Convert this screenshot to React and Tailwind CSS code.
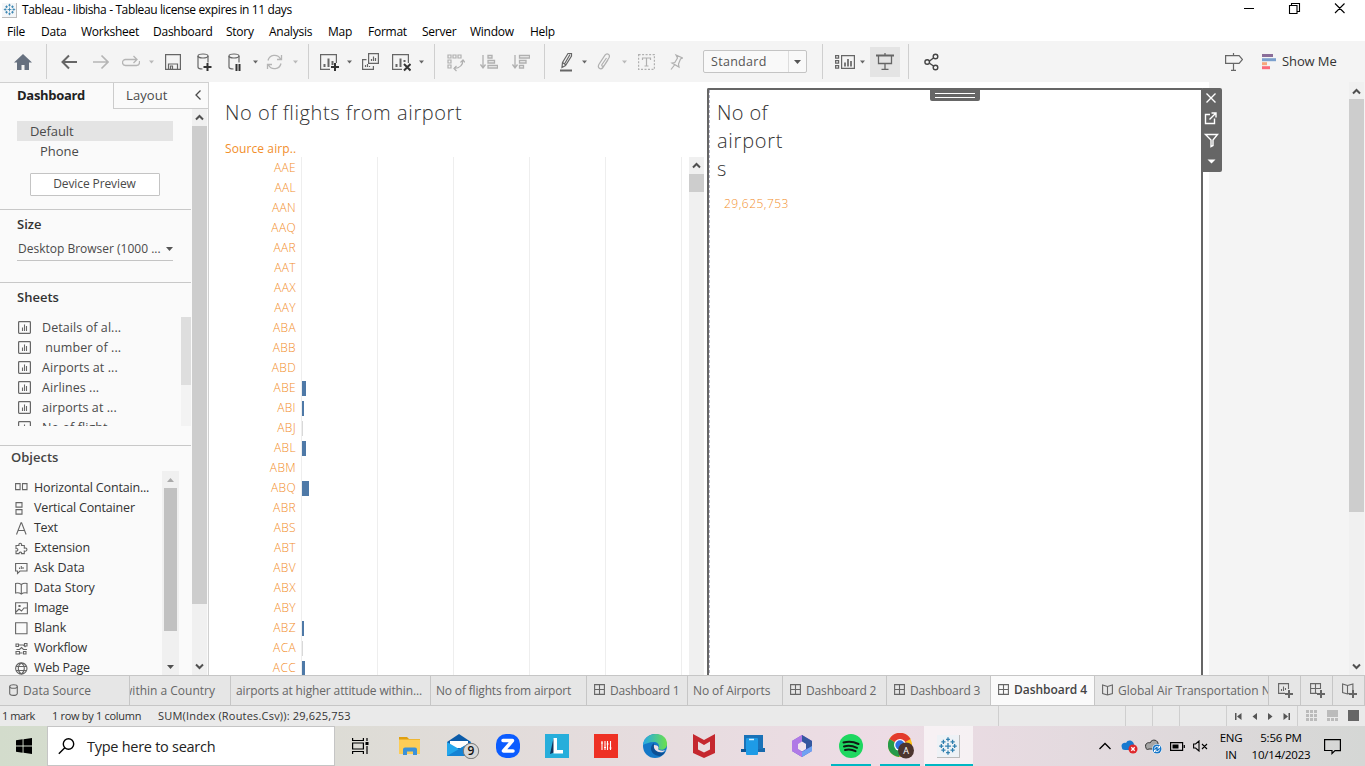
import React from "react";

const UI = "font-['Open_Sans','Noto_Sans',sans-serif]";

function Svg({ w, h = 20, className = "", children, ...rest }) {
  return (
    <svg width={w} height={h} viewBox={`0 0 ${w} ${h}`} fill="none" stroke="currentColor" className={`shrink-0 ${className}`} {...rest}>
      {children}
    </svg>
  );
}

const Sep = ({ className = "" }) => <div className={`h-[35px] w-px shrink-0 bg-[#cfcfcf] ${className}`} />;
const Caret = ({ className = "", light }) => (
  <Svg w={5} h={4} className={`${className} ${light ? "text-[#b9b9b9]" : "text-[#666]"}`} stroke="none">
    <path d="M0 0.5h5L2.5 3.5z" fill="currentColor" />
  </Svg>
);
const Chevron = ({ up, className = "" }) => (
  <Svg w={9} h={7} className={`text-[#505050] ${className}`} strokeWidth="2">
    <path d={up ? "M1 5.5L4.5 2L8 5.5" : "M1 1.5L4.5 5L8 1.5"} />
  </Svg>
);

function TableauMark({ size, className = "" }) {
  return (
    <svg width={size} height={size} viewBox="0 0 24 24" className={className} stroke="#2f7fae" strokeWidth="1.5">
      <path d="M12 8.5v7M8.5 12h7M12 1.5v5M9.7 4h4.6M12 17.5v5M9.7 20h4.6M1.5 12h5M4 9.7v4.6M17.5 12h5M20 9.7v4.6M6.5 4.5v5M4 7h5M17.5 4.5v5M15 7h5M6.5 14.5v5M4 17h5M17.5 14.5v5M15 17h5" />
    </svg>
  );
}

const menus = [
  ["File", "w-[34px]"], ["Data", "w-10"], ["Worksheet", "w-18"], ["Dashboard", "w-[73px]"], ["Story", "w-[43px]"],
  ["Analysis", "w-[59px]"], ["Map", "w-10"], ["Format", "w-[54px]"], ["Server", "w-12"], ["Window", "w-15"], ["Help", "w-10"],
];

function TitleBar() {
  return (
    <header className="h-[41px] shrink-0 bg-white text-[12px] text-black">
      <div className="flex h-5 items-center">
        <div className="ml-[2px] flex size-[15px] items-center justify-center border-r border-b border-[#bbb] bg-[#f4f6f8]">
          <TableauMark size={13} />
        </div>
        <span className="ml-[5px] whitespace-nowrap tracking-[-0.37px]">Tableau - libisha - Tableau license expires in 11 days</span>
        <Svg w={104} h={12} className="-mt-1 mr-[18px] ml-auto" strokeWidth="1.100">
          <path d="M1 6.500h10M46.500 3.500h7.500v8h-7.500zM48.500 3v-1.500h8v8h-2M92 1.500l9.500 9.500M101.500 1.500l-9.500 9.500" />
        </Svg>
      </div>
      <nav className="ml-[7px] flex h-[21px] items-center pt-[2px] tracking-[-0.25px]">
        {menus.map(([m, w]) => <span key={m} className={`${w} shrink-0 whitespace-nowrap`}>{m}</span>)}
      </nav>
    </header>
  );
}

function Toolbar() {
  return (
    <div className="flex h-[41px] shrink-0 items-center bg-[#f4f4f4] text-[#666]">
      <Svg w={18} className="ml-3.5 text-[#66707f]" stroke="none"><path fill="currentColor" d="M9 2L0 10.500h3V18h4.500v-5h3v5H15v-7.500h3z" /></Svg>
      <Sep className="ml-3.5" />
      <Svg w={16} className="ml-3.5" strokeWidth="2"><path d="M1 10h15M8 3.500L1.500 10L8 16.500" /></Svg>
      <Svg w={16} className="ml-4 text-[#b5b5b5]" strokeWidth="1.7"><path d="M0 10h15M8.500 3.500L15 10l-6.500 6.500" /></Svg>
      <Svg w={18} className="ml-[13px] text-[#b5b5b5]" strokeWidth="1.3"><path d="M14.500 7.500H3.500a3 3 0 0 0 0 6h11a3 3 0 0 0 3-3v-1.500M11.500 4L15 7.500L11.500 11" /></Svg>
      <Caret light className="ml-[9px]" />
      <Svg w={16} className="ml-[11px]" strokeWidth="1.2"><path d="M.6 2.600h14.800v14.800H.6zM3.500 17v-5h9v5M5.500 17v-3h2v3" /></Svg>
      <Svg w={15} className="ml-4" strokeWidth="1.2">
        <ellipse cx="6" cy="4" rx="5" ry="2" /><path d="M1 4v11c0 1.200 2 2 4.500 2M11 4v6.500" />
        <path d="M10.500 11v8M6.500 15h8" stroke="#333" strokeWidth="2" />
      </Svg>
      <Svg w={14} className="ml-4" strokeWidth="1.2">
        <ellipse cx="6" cy="4" rx="5" ry="2" /><path d="M1 4v11c0 1.200 2 2 4.500 2M11 4v6.500" />
        <path d="M8.500 12v7M11.500 12v7" stroke="#333" strokeWidth="2" />
      </Svg>
      <Caret className="ml-[11px]" />
      <Svg w={17} className="ml-2 text-[#b5b5b5]" strokeWidth="1.300"><path d="M2 8.500A6.700 6.700 0 0 1 14.500 7M15 11.500A6.700 6.700 0 0 1 2.500 13M15.500 3v4.500H11M1.500 17v-4.500H6" /></Svg>
      <Caret light className="ml-2.5" />
      <Sep className="ml-2.5" />
      <Svg w={19} className="ml-[11px]" strokeWidth="1.2">
        <path d="M10 17.400H.6V2.600h15.800V11" /><path d="M4.500 15v-3M8.500 15V6.500M12.500 13V9" strokeWidth="2" />
        <path d="M15 11v8M11 15h8" stroke="#333" strokeWidth="2" />
      </Svg>
      <Caret className="ml-2" />
      <Svg w={17} className="ml-2.5" strokeWidth="1.2"><path d="M6.600 1.600h9.800v9.800H6.600zM4.500 7.600H.6v9.800h10.800v-3.500M9.500 9V7M11.500 9V4.500M13.500 9V6M3.500 15v-2M5.500 15v-3M7.500 15v-1" /></Svg>
      <Svg w={19} className="ml-[13px]" strokeWidth="1.2">
        <path d="M10 17.400H.6V2.600h15.800V11" /><path d="M4.500 15v-3M8.500 15V6.500M12.500 10V8" strokeWidth="2" />
        <path d="M12 12l6.500 6.500M18.500 12L12 18.500" stroke="#333" strokeWidth="2" />
      </Svg>
      <Caret className="ml-2" />
      <Sep className="ml-2.5" />
      <Svg w={18} className="ml-3 text-[#b0b0b0]" strokeWidth="1.2"><path d="M1 3h3v3H1zM6 3h3v3H6zM11 3h3v3h-3zM1 8h3v3H1zM1 13h3v3H1zM16 8c0 5-3 8-9 8.500M13.500 10.500L16 8l2 2.500M9.500 14L7 16.500L9.500 19" /></Svg>
      <Svg w={18} className="ml-[15px] text-[#b0b0b0]" strokeWidth="1.3"><path d="M3 3v13M.5 12.500L3 16l2.500-3.500M8 3.500h4V6H8zM8 8.500h6.500V11H8zM8 13.500h9.500V16H8z" /></Svg>
      <Svg w={18} className="ml-3.5 text-[#b0b0b0]" strokeWidth="1.3"><path d="M3 3v13M.5 12.500L3 16l2.500-3.500M7.500 3.500h10V6h-10zM7.500 8.500H14V11H7.500zM7.500 13.500h4V16h-4z" /></Svg>
      <Sep className="ml-3.5" />
      <Svg w={13} className="ml-[15px]" strokeWidth="1.2"><path d="M2.500 10.500L8 1.500h3.500v2.500L5.500 13.500l-3.500 2zM2.500 10.500l3.500 2.500M10 2.500l-5.500 9.500" /><path d="M0 18.500h12" strokeWidth="2" /></Svg>
      <Caret className="ml-[9px]" />
      <Svg w={14} className="ml-2.5 text-[#b0b0b0]" strokeWidth="1.2"><path d="M9.500 6L5 12.500c-.8 1.500 1 2.500 2 1.200l5-8C13.500 2.500 10 .5 8 3.200l-6 9C0 15.800 3.500 18.500 6 15.500l5-7.500" /></Svg>
      <Caret light className="ml-[11px]" />
      <Svg w={17} className="ml-[11px] text-[#b0b0b0]" strokeWidth="1.2"><path d="M.6 2.600h15.800v14.800H.6z" strokeDasharray="2 1.500" /><path d="M4.500 8V6h8v2M8.500 6v8M6.500 14h4" /></Svg>
      <Svg w={13} className="ml-[15px] text-[#b0b0b0]" strokeWidth="1.2"><path d="M6 3l6.500 3-2 1-2 5 .5 3-7-4 2.800-.5L7.500 6zM4.500 13L1 17.500" /></Svg>
      <div className={`ml-5 flex h-[23px] w-[104px] shrink-0 rounded-[2px] border border-[#c4c4c4] bg-[#f9f9f9] ${UI} text-[12.5px] leading-[21px] text-[#555]`}>
        <span className="w-[84px] pl-[7px] tracking-[0.3px]">Standard</span>
        <span className="flex w-[18px] items-center justify-center border-l border-[#ddd]"><Svg w={7} h={4} stroke="none"><path d="M0 0h7L3.500 4z" fill="#555" /></Svg></span>
      </div>
      <Sep className="ml-[15px]" />
      <Svg w={20} className="ml-3" strokeWidth="1.2"><path d="M.6 3.600h3v2.500h-3zM.6 8.600h3v2.500h-3zM.6 13.600h3v2.500h-3zM6.600 3.600h12.800v12.800H6.600z" /><path d="M10 14.500v-4M13 14.500V7M16 14.500V9" strokeWidth="1.7" /></Svg>
      <Caret className="ml-[5px]" />
      <div className="ml-[5px] flex h-[30px] w-[30px] shrink-0 items-center justify-center bg-[#e4e4e4]">
        <Svg w={18} h={20} strokeWidth="1.300"><path d="M0 3.500h18" strokeWidth="2" /><path d="M2.500 4v7.500h13V4M9 1v2M9 11.500V17M5.500 17.400h7" /></Svg>
      </div>
      <Sep className="ml-2" />
      <Svg w={15} className="ml-[15px] text-[#444]" strokeWidth="1.4"><circle cx="11.500" cy="4.500" r="2.300" /><circle cx="3.200" cy="10" r="2.300" /><circle cx="11.500" cy="15.500" r="2.300" /><path d="M5.500 9L9.500 6M5.500 11.200l4 2.800" /></Svg>
      <Svg w={18} className="ml-[286px]" strokeWidth="1.2"><path d="M8.500 1v2.500M.6 3.600h13.500L17.500 7.500l-3.400 3.900H.6zM8.500 11.500V18M6 18.400h5" /></Svg>
      <Svg w={14} h={16} className="ml-[19px]" stroke="none"><path fill="#8a6d99" d="M0 0h11v3H0z" /><path fill="#7ba0cd" d="M0 4.200h14v3H0z" /><path fill="#f7a77c" d="M0 8.200h5v3H0z" /><path fill="#fb6b7b" d="M0 12.200h8v3H0z" /></Svg>
      <span className={`ml-1.5 whitespace-nowrap ${UI} text-[13px] tracking-[-0.1px] text-[#333]`}>Show Me</span>
    </div>
  );
}

const SheetIcon = () => (
  <Svg w={13} h={13} className="-mt-px text-[#666]" strokeWidth="1.2"><rect x=".6" y=".6" width="11.800" height="11.800" rx=".8" /><path d="M4.500 10V6.500M6.500 10V3.500M8.500 10V5" strokeWidth="1.100" /></Svg>
);

const objects = [
  ["Horizontal Contain...", "M.6 1.600h4.500v6H.6zM7.500 1.600h4.500v6H7.500z", "tracking-[-0.18px]"],
  ["Vertical Container", "M1 .6h6v4.500H1zM1 7.600h6v4.500H1z", "tracking-[-0.17px]"],
  ["Text", "M1.500 12.500L6 .8h.6l4.500 11.700M3 8.500h6.500", "tracking-[-0.3px]"],
  ["Extension", "M1 5V3.500h3C3 .5 7.500.5 6.500 3.500h2.800v2.600c3.500-1 3.500 4 0 3v2.500H6.500c.5-2-2.500-2-2.500 0H1V9c2.500.5 2.500-3 0-2.500z", "tracking-[-0.1px]"],
  ["Ask Data", "M.6 1.500h11.400v7.500H5L2.500 11.500V9H.6zM4.500 7V5.500M6.300 7V4M8 7V5", "tracking-[-0.05px]"],
  ["Data Story", "M6.300 2.500C4.500 1.300 2.500 1 .6 1.500v9.500c2-.5 4-.2 5.700 1c1.700-1.200 3.700-1.500 5.700-1V1.500c-2-.5-4-.2-5.700 1zM6.300 2.500V12", ""],
  ["Image", "M.6 .8h11.800v11H.6zM1 10l3-3 2.500 2L9 6h3.500M4 3.500h1v1H4z", "tracking-[-0.25px]"],
  ["Blank", "M.6 .8h11.400v11H.6z", "tracking-[-0.05px]"],
  ["Workflow", "M1 2h2.500v2.500H1zM3.500 3h5l2 2M9.500 1.500H12V4H9.500zM1.500 7.500h3l2-2 2 2h3.500M1 9.500h3.500V12H1zM4.500 11h3M8.500 9.500H11V12H8.500z", "tracking-[-0.3px]"],
  ["Web Page", "M6.300 .8a5.600 5.600 0 1 0 .01 0zM6.300 .8c-4 3-4 8.500 0 11.400c4-3 4-8.500 0-11.400M1 4.500h10.500M1 8.500h10.500", "tracking-[-0.25px]"],
];

function Sidebar() {
  return (
    <aside className={`flex w-[209px] shrink-0 flex-col border-t border-r border-[#d0d0d0] bg-[#fafafa] ${UI} text-[12.5px] text-[#4a4a4a]`}>
      <div className="flex h-[26px] shrink-0">
        <div className="w-[113px] pt-[3px] pl-[17px] text-[13px] leading-[18px] font-bold tracking-[-0.3px] text-[#222]">Dashboard</div>
        <div className="flex grow justify-between border-b border-l border-[#ccc] pt-[3px] pr-[7px] pl-3 text-[13px] leading-[18px] tracking-[0.1px]">
          Layout
          <Svg w={6} h={10} className="mt-1" strokeWidth="1.300"><path d="M5.500 .5L1 5l4.500 4.500" /></Svg>
        </div>
      </div>
      <div className="flex min-h-0 grow">
        <div className="flex w-[191px] shrink-0 flex-col overflow-hidden">
          <div className="h-[101px] shrink-0 border-b border-[#c8c8c8] pt-3 pl-[17px]">
            <div className="h-5 w-[156px] bg-[#e4e4e4] pl-[13px] text-[13px] leading-5 tracking-[-0.1px]">Default</div>
            <div className="h-5 pl-[23px] text-[13px] leading-5">Phone</div>
            <div className="mt-3 ml-[13px] h-[23px] w-[130px] rounded-[1px] border border-[#c4c4c4] bg-white pr-px text-center text-[12px] leading-[20px] tracking-[-0.1px]">Device Preview</div>
          </div>
          <div className="h-[73px] shrink-0 border-b border-[#c8c8c8] pt-[5px] pl-[17px]">
            <div className="text-[13px] leading-[18px] font-semibold text-[#333]">Size</div>
            <div className="mt-[6px] flex h-[22px] w-[156px] items-center justify-between border-b border-[#c4c4c4] pb-[1px] pl-px text-[12px]">
              <span className="whitespace-nowrap">Desktop Browser (1000 ...</span>
              <Svg w={7} h={4} stroke="none"><path d="M0 0h7L3.500 4z" fill="#555" /></Svg>
            </div>
          </div>
          <div className="h-[163px] shrink-0 border-b border-[#c8c8c8] pt-[5px]">
            <div className="pl-[17px] text-[13px] leading-[18px] font-semibold text-[#333]">Sheets</div>
            <div className="mt-[11px] flex h-[109px] overflow-hidden">
              <div className="w-[181px] pt-px pl-[18px]">
                {["Details of al...", "\u00a0number of ...", "Airports at ...", "Airlines ...", "airports at ...", "No of flight..."].map((s) => (
                  <div key={s} className="flex h-5 items-center gap-[11px]"><SheetIcon /><span className="text-[12.5px] tracking-[0.08px]">{s}</span></div>
                ))}
              </div>
              <div className="w-2.5 bg-[#f3f3f3]"><div className="h-[68px] bg-[#dedede]" /></div>
            </div>
          </div>
          <div className="flex min-h-0 grow flex-col">
            <div className="pt-[2px] pl-[11px] text-[13px] leading-[18px] font-semibold text-[#444]">Objects</div>
            <div className="mt-[5px] flex min-h-0 grow">
              <div className="w-[162px] overflow-hidden pt-[7px] pl-[15px] whitespace-nowrap text-[#333]">
                {objects.map(([n, d, t]) => (
                  <div key={n} className="flex h-5 items-center gap-1.5">
                    <Svg w={13} h={13} className="text-[#666]" strokeWidth="1.100"><path d={d} /></Svg>
                    <span className={t}>{n}</span>
                  </div>
                ))}
              </div>
              <div className="flex w-[17px] flex-col items-center bg-[#f0f0f0]">
                <Svg w={7} h={4} className="mt-[7px]" stroke="none"><path d="M0 4h7L3.500 0z" fill="#aaa" /></Svg>
                <div className="mt-[6px] h-[143px] w-[13px] bg-[#c1c1c1]" />
                <Svg w={7} h={4} className="mt-auto mb-[6px]" stroke="none"><path d="M0 0h7L3.500 4z" fill="#505050" /></Svg>
              </div>
            </div>
          </div>
        </div>
        <div className="ml-px flex w-[15px] flex-col items-center bg-[#f0f0f0]">
          <Chevron up className="mt-[5px]" />
          <div className="mt-[5px] h-[478px] w-full bg-[#cdcdcd]" />
          <Chevron className="mt-auto mb-[5px]" />
        </div>
      </div>
    </aside>
  );
}

const rows = [
  ["AAE"], ["AAL"], ["AAN"], ["AAQ"], ["AAR"], ["AAT"], ["AAX"], ["AAY"], ["ABA"], ["ABB"], ["ABD"],
  ["ABE", 4], ["ABI", 1.5], ["ABJ", 0.5], ["ABL", 4], ["ABM"], ["ABQ", 7], ["ABR"], ["ABS"], ["ABT"], ["ABV"], ["ABX"], ["ABY"],
  ["ABZ", 1.5], ["ACA", 0.5], ["ACC", 3],
];

function FlightsSheet() {
  return (
    <section className="flex w-[498px] shrink-0 flex-col overflow-hidden bg-white">
      <h1 className="mt-[17px] pl-4 text-[20px] leading-7 font-light tracking-[0.58px] text-[#333]">No of flights from airport</h1>
      <div className="mt-[13px] h-[17px] pl-4 text-[12px] leading-[17px] font-medium tracking-[0.1px] text-[#f28e2b]">Source airp..</div>
      <div className="flex min-h-0 grow">
        <div className="h-[520px] w-[480px] shrink-0 bg-[repeating-linear-gradient(to_right,#eeeeee_0_1px,transparent_1px_76px)] bg-[position:92px_0] bg-no-repeat pt-px">
          {rows.map(([name, v]) => (
            <div key={name} className="flex h-5 items-center">
              <span className="w-[87px] text-right text-[12px] font-light tracking-[0.35px] text-[#f28e2b]">{name}</span>
              {v && <span className={`ml-1.5 h-[15px] ${v < 1 ? "bg-[#d9d9d9]" : "bg-[#4e79a7]"}`} style={{ width: Math.max(1, v) }} />}
            </div>
          ))}
        </div>
        <div className="flex w-[15px] shrink-0 flex-col items-center bg-[#f0f0f0]">
          <Chevron up className="mt-[5px]" />
          <div className="mt-[5px] h-[18px] w-full bg-[#cdcdcd]" />
        </div>
      </div>
    </section>
  );
}

function AirportsSheet() {
  return (
    <section className="relative mt-[6px] h-[590px] w-[496px] shrink-0 rounded-t-[2px] border-t-2 border-r-2 border-l-2 border-[#666] bg-white">
      <div className="h-full border-l border-dashed border-[#b4b4c4] pt-[9px] pl-[7px]">
        <h1 className="w-[74px] text-[20px] leading-7 font-light tracking-[0.75px] [overflow-wrap:anywhere] text-[#333]"><span className="tracking-[0.35px]">No of</span> airport<br />s</h1>
        <div className="mt-[11px] ml-[7px] text-[12px] leading-5 font-light tracking-[0.5px] text-[#f28e2b]">29,625,753</div>
      </div>
      <div className="absolute -top-0.5 left-[221px] flex h-[13px] w-[50px] flex-col gap-[3px] rounded-b-[2px] bg-[#666] px-[5px] pt-[5px]">
        <div className="h-px bg-white" /><div className="h-px bg-white" />
      </div>
      <div className="absolute -top-0.5 left-[492px] h-[84px] w-[21px] rounded-[2px] bg-[#666] text-white">
        <Svg w={21} h={84} strokeWidth="1.400"><path d="M5.500 5.500l9 9M14.500 5.500l-9 9M9 26.500H4.500v9h9v-5M8.500 31.500l6-6M10.500 25h4.500V29.500M4.500 46.500h12L12 52v5.500l-2 1V52z" /><path d="M6.500 71.500h8L10.500 75.500z" fill="#fff" stroke="none" /></Svg>
      </div>
    </section>
  );
}

const GridIcon = () => <Svg w={11} h={11} className="text-[#666]" strokeWidth="1.100"><path d="M.6.6h9.800v9.800H.6zM5.500 .5v10M.5 5.500h10" /></Svg>;
const BookIcon = () => <Svg w={11} h={12} className="text-[#666]" strokeWidth="1.100"><path d="M5.500 2.500L.6 1v8.500L5.500 11l4.900-1.500V1zM5.500 2.500V11" /></Svg>;

function Tab({ w, icon, children, active, end, track = "" }) {
  return (
    <div className={`flex shrink-0 items-center overflow-hidden border-r border-[#c6c6c6] whitespace-nowrap ${w} ${track} ${end ? "justify-end pr-[15px]" : icon ? "pl-[7px]" : "pl-[5px]"} ${active ? "bg-[#fafafa] font-semibold text-[#444]" : "text-[#666]"}`}>
      {icon && <span className="-mt-0.5 mr-[5px]">{icon}</span>}
      <span className={active ? "-mt-0.5" : ""}>{children}</span>
    </div>
  );
}

function SheetTabs() {
  return (
    <div className={`flex h-[31px] shrink-0 border-y border-[#c6c6c6] bg-[#e6e6e6] ${UI} text-[12px]`}>
      <div className="flex w-[130px] shrink-0 items-center border-r border-[#c6c6c6] pl-[9px] text-[#666]">
        <Svg w={9} h={12} className="-mt-0.5" strokeWidth="1.100"><ellipse cx="4.500" cy="2.500" rx="3.800" ry="1.800" /><path d="M.7 2.500v7c0 2.500 7.600 2.500 7.600 0v-7" /></Svg>
        <span className="ml-[5px]">Data Source</span>
      </div>
      <Tab w="w-[101px]" end>within a Country</Tab>
      <Tab w="w-[200px]" track="tracking-[-0.14px]">airports at higher attitude within...</Tab>
      <Tab w="w-[156px]" track="tracking-[-0.17px]">No of flights from airport</Tab>
      <Tab w="w-[101px]" track="tracking-[-0.22px]" icon={<GridIcon />}>Dashboard 1</Tab>
      <Tab w="w-[95px]" track="tracking-[-0.1px]">No of Airports</Tab>
      <Tab w="w-[104px]" track="tracking-[-0.15px]" icon={<GridIcon />}>Dashboard 2</Tab>
      <Tab w="w-[104px]" track="tracking-[-0.15px]" icon={<GridIcon />}>Dashboard 3</Tab>
      <Tab w="w-[104px]" track="tracking-[-0.05px]" icon={<GridIcon />} active>Dashboard 4</Tab>
      <Tab w="w-[174px]" track="tracking-[-0.03px]" icon={<BookIcon />}>Global Air Transportation Network</Tab>
      {["M10.500 6V.6H.6v9.800H7M3.500 8V6M5.500 8V3.500M7.500 7V5", "M10.500 6V.6H.6v9.800H7M5.500 .5v9.500M.5 5.500h10", "M5.500 2.500L.6 1v8.500L5.500 11l2-.6M5.500 2.500L10.900 1v6M5.500 2.500V11"].map((d) => (
        <div key={d} className="flex w-8 shrink-0 items-center justify-center border-r border-[#c6c6c6] pl-px text-[#666]">
          <Svg w={15} h={15} strokeWidth="1.100"><path d={d} /><path d="M11 7v8M7 11h8" strokeWidth="2" /></Svg>
        </div>
      ))}
    </div>
  );
}

function StatusBar() {
  return (
    <div className={`flex h-5 shrink-0 items-center bg-[#eaeaea] ${UI} text-[11px] whitespace-nowrap text-[#333]`}>
      <span className="ml-[2px] w-[50px] tracking-[-0.5px]">1 mark</span>
      <span className="w-[106px] tracking-[-0.3px]">1 row by 1 column</span>
      <span className="w-[840px] shrink-0 tracking-[0.19px]">SUM(Index (Routes.Csv)): 29,625,753</span>
      {["w-[127px]", "w-[27px]", "w-[27px]", "w-[47px]"].map((w, i) => <div key={i} className={`h-full shrink-0 border-l border-[#cfcfcf] ${w}`} />)}
      <div className="flex h-full w-[71px] shrink-0 items-center border-l border-[#cfcfcf] pl-2">
        <Svg w={56} h={9} stroke="none"><path fill="#555" d="M0 1h1.500v7H0zM6.500 1v7L2 4.500zM22 1v7l-4.500-3.500zM33 1v7l4.500-3.500zM48.500 1v7L53 4.500zM53.500 1H55v7h-1.500z" /></Svg>
      </div>
      <div className="flex h-full grow items-center border-l border-[#cfcfcf] pl-2">
        <Svg w={55} h={11} stroke="none" className="-mt-px"><path fill="#bbb" d="M0 0h3v3H0zM4 0h3v3H4zM8 0h3v3H8zM0 4h3v3H0zM4 4h3v3H4zM8 4h3v3H8zM0 8h3v3H0zM4 8h3v3H4zM8 8h3v3H8zM21 0h11v7H21zM21 8h3v3h-3zM25 8h3v3h-3zM29 8h3v3h-3z" /><path fill="#666" d="M42 0h11v11H42z" /></Svg>
      </div>
    </div>
  );
}

function App24({ children, box = "0 0 24 24" }) {
  return <svg width="24" height="24" viewBox={box}>{children}</svg>;
}

const apps = [
  <App24 key="explorer"><path d="M1 3h8l2 2h11v5H1z" fill="#e0a010" /><path d="M1 5.500h21V20H1z" fill="#fccd57" /><path d="M5 21v-5.500a2 2 0 0 1 2-2h10a2 2 0 0 1 2 2V21h-4v-3.500H9V21z" fill="#3b91d8" /></App24>,
  <svg key="mail" width="34" height="26" viewBox="0 0 34 26" className="ml-2"><path d="M1 9L13 1l12 8v13H1z" fill="#0b5ba8" /><path d="M4 8h18v7H4z" fill="#fff" /><path d="M1 9l12 7L25 9v14H1z" fill="#23a7ec" /><path d="M1 23l24-14v14z" fill="#1583d4" /><circle cx="25" cy="18" r="7.700" fill="#d8d8d8" stroke="#777" /><text x="25" y="22.300" fontSize="12" textAnchor="middle" fontFamily="Open Sans" fontWeight="600" fill="#111">9</text></svg>,
  <App24 key="z"><rect width="24" height="24" rx="10" fill="#0b5cff" /><path d="M7 6.500h9.500L7.500 17H17" fill="none" stroke="#fff" strokeWidth="3.500" strokeLinejoin="round" strokeLinecap="round" /></App24>,
  <App24 key="l"><path d="M0 0h24v24H0z" fill="#27aedb" /><path d="M8.500 4L5 20l5-2z" fill="#12345c" /><path d="M8.500 4H12v12h6v3.500H8.500z" fill="#fff" /></App24>,
  <App24 key="eq"><path d="M0 0h24v24H0z" fill="#ee3124" /><path d="M8 7v9M11 7v9M13.500 7v9M16.500 7v9" stroke="#fff" strokeWidth="1.100" /><path d="M7 9h2M10 13.500h2M12.700 10h2M15.500 14h2" stroke="#fff" /></App24>,
  <App24 key="edge"><defs><linearGradient id="eg" x1="0" x2="1"><stop stopColor="#25a8e8" /><stop offset="1" stopColor="#6be04b" /></linearGradient></defs><circle cx="12" cy="12" r="12" fill="#1478c8" /><path d="M0 11C1-3 24-4 24 10c0 5-5 7-9 5c2-2 1-7-4-7c-5 0-9 2-11 3z" fill="url(#eg)" /><path d="M11 9c-5 3-4 12 5 13c3 0 5-2 6-4c-6 2-12-1-11-9z" fill="#0c4f94" /><path d="M11 11c-1 5 4 8 9 7l3-2c-2 1-7 1-8-1c1-1 1-4-4-4z" fill="#eee0e5" /></App24>,
  <App24 key="mcafee"><path d="M1 0l11 6L23 0v19l-11 5L1 19z" fill="#c5282f" /><path d="M6 7.500l6 3.500 6-3.500v8L12 18.500 6 15.500z" fill="#eadde0" /></App24>,
  <App24 key="phone"><path d="M3 1h19v13h2v4H13V1z" fill="#1769ad" /><path d="M3 1h19v14H3z" fill="#1a72b8" /><rect x="5" y="4" width="12" height="17" rx="1" fill="#1e9be6" /><path d="M0 15h5v3H0z" fill="#0f5795" /><path d="M8 5.500h5" stroke="#d8f3ff" strokeWidth="1.500" /></App24>,
  <App24 key="office"><defs><linearGradient id="og" y2="1" x2="0"><stop stopColor="#8e5ad8" /><stop offset="1" stopColor="#4f57cd" /></linearGradient></defs><path d="M12 1l10 6v10l-10 6-10-6V7z" fill="url(#og)" /><path d="M2 7L12 1v7L8 10v5l4 3v5L2 17z" fill="#b07ae6" /><path d="M12 1l10 6v6l-6 2v-5l-4-2z" fill="#35589f" /><path d="M12 23l10-6v-5l-10 6z" fill="#6ea2f2" /><path d="M12 7.500l4 2.500v5L12 17.500 8 15v-5z" fill="#f1e5ed" /></App24>,
  <App24 key="spotify"><circle cx="12" cy="12" r="12" fill="#1ed760" /><path d="M4.500 8.500c5-1.500 10-1 15 1.500M5 12.500c4.500-1.300 8.500-.8 13 1.300M6 16c4-1 7-.6 10.500 1.200" fill="none" stroke="#101a14" strokeWidth="2" strokeLinecap="round" /></App24>,
  <svg key="chrome" width="28" height="26" viewBox="0 0 28 26" className="ml-1"><circle cx="12" cy="12" r="12" fill="#fbc116" /><path d="M12 12L1.500 6A12 12 0 0 1 22.500 6z" fill="#e33b2e" /><path d="M1.500 6A12 12 0 0 0 11 24l5-9z" fill="#269b4a" /><circle cx="12" cy="12" r="6" fill="#fff" /><circle cx="12" cy="12" r="4.700" fill="#2d6fe0" /><circle cx="18" cy="17.500" r="8" fill="#4c352f" /><text x="18" y="21" fontSize="9" textAnchor="middle" fontFamily="Open Sans" fill="#fff">A</text></svg>,
  <div key="tableau" className="flex size-[23px] items-center justify-center border-r border-b border-[#bbb] bg-[#eef2f6]"><TableauMark size={20} /></div>,
];

function Taskbar() {
  return (
    <footer className="flex h-10 shrink-0 items-stretch bg-linear-to-r from-[#d3dccc] via-[#eddce5] via-65% to-[#d5d7d5] text-black">
      <div className="flex w-[47px] shrink-0 items-center justify-center">
        <Svg w={16} h={16} stroke="none"><path fill="currentColor" d="M0 2.300L6.600 1.300V7.500H0zM7.500 1.200L16 0v7.500H7.500zM0 8.400h6.600v6.300L0 13.700zM7.500 8.400H16V16l-8.500-1.200z" /></Svg>
      </div>
      <div className="flex w-[288px] shrink-0 items-center border border-[#c5c5c5] bg-white">
        <Svg w={17} h={17} className="ml-2.5" strokeWidth="1.400"><circle cx="10.500" cy="6" r="5.200" /><path d="M6.800 9.700L.8 15.700" /></Svg>
        <span className="mt-0.5 ml-3 text-[14.5px] tracking-[-0.27px] text-[#222]">Type here to search</span>
      </div>
      <div className="flex w-[50px] shrink-0 items-center justify-center">
        <Svg w={17} h={16} strokeWidth="1.200"><path d="M.6 0v2.500h10.800V0M.6 5h10.800v6H.6zM.6 16v-2.500h10.800V16M15 0v3M15 8v8" /><path d="M13.500 4h3v3h-3z" fill="currentColor" stroke="none" /></Svg>
      </div>
      {apps.map((a, i) => (
        <div key={i} className={`flex w-[49px] shrink-0 items-center justify-center ${i === 11 ? "bg-white/60" : ""} ${i > 8 ? "relative" : ""}`}>
          {a}
          {i > 8 && <span className={`absolute bottom-0 h-0.5 bg-[#00b7c3] ${i === 11 ? "w-[48px]" : "w-10"}`} />}
        </div>
      ))}
      <div className="ml-auto flex items-center">
        <Svg w={12} h={8} strokeWidth="1.300"><path d="M.5 7L6 1.500 11.500 7" /></Svg>
        <svg width="17" height="16" viewBox="0 0 17 16" className="ml-[10px]"><path d="M1 10C-1 5 4 4 5 5C7 0 14 3 13 8c2 0 2 4 0 4H4C2 12 1 11 1 10z" fill="#1879cf" /><circle cx="12" cy="11" r="4.500" fill="#df292d" /><path d="M10.300 9.300l3.400 3.400M13.700 9.300l-3.400 3.400" stroke="#fff" strokeWidth="1.300" /></svg>
        <svg width="17" height="16" viewBox="0 0 17 16" className="ml-[7px]"><path d="M1 10C-1 5 4 4 5 5C7 0 14 2 13 7l1 4H4C2 12 1 11 1 10z" fill="#a5a5a5" stroke="#333" /><circle cx="12" cy="11" r="5" fill="#fff" /><circle cx="12" cy="11" r="4.500" fill="#1776c8" /><path d="M9.500 10.500a2.500 2.500 0 0 1 4.500-1M14.500 8v2h-2M14.500 11.500a2.500 2.500 0 0 1-4.500 1M9.500 14v-2h2" fill="none" stroke="#fff" /></svg>
        <Svg w={15} h={9} className="ml-2" strokeWidth="1.200"><path d="M.6.6h12v7.800H.6zM14.300 3v3" /><path d="M2.500 2.500h6v4h-6z" fill="currentColor" stroke="none" /></Svg>
        <Svg w={15} h={12} className="ml-2" strokeWidth="1.100"><path d="M.6 4v4h2L6 11V1L2.600 4zM9 4l5 5M14 4L9 9" /></Svg>
        <div className="ml-[9px] w-7 text-center text-[11.5px] leading-[17px] tracking-[-0.3px]"><div>ENG</div><div>IN</div></div>
        <div className="ml-[5px] w-[62px] text-center text-[11.5px] leading-[17px] tracking-[-0.22px] whitespace-nowrap"><div>5:56 PM</div><div>10/14/2023</div></div>
        <Svg w={17} h={17} className="mr-6 ml-[12px]" strokeWidth="1.200"><path d="M.6 1.600h15.800v11H11L8 15.500v-3H.6z" /></Svg>
      </div>
    </footer>
  );
}

export default function App() {
  return (
    <div className={`flex h-[766px] w-[1365px] flex-col overflow-hidden bg-[#f4f4f4] ${UI}`}>
      <TitleBar />
      <Toolbar />
      <main className="flex h-[593px] shrink-0 overflow-hidden">
        <Sidebar />
        <div className="flex w-[1000px] shrink-0 bg-white">
          <FlightsSheet />
          <AirportsSheet />
        </div>
        <div className="mr-px ml-auto flex w-[15px] flex-col items-center bg-[#f0f0f0]">
          <Chevron up className="mt-[6px]" />
          <div className="mt-[4px] h-[413px] w-full bg-[#cdcdcd]" />
          <Chevron className="mt-auto mb-[5px]" />
        </div>
      </main>
      <SheetTabs />
      <StatusBar />
      <Taskbar />
    </div>
  );
}
